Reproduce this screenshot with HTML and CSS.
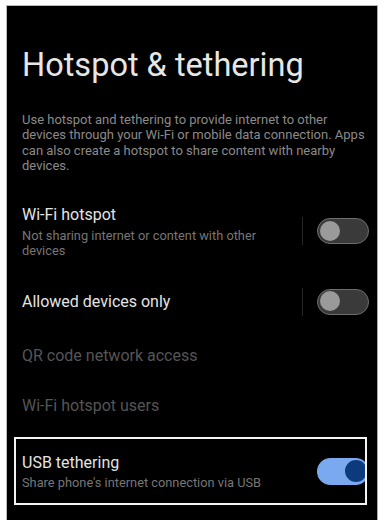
FILE: index.html
```html
<!DOCTYPE html>
<html lang="en">
<head>
    <meta charset="UTF-8">
    <meta name="viewport" content="width=device-width, initial-scale=1.0">
    <title>Hotspot &amp; tethering</title>
    <link rel="stylesheet" href="styles.css">
</head>
<body>
    <div class="screen">
        <h1>Hotspot &amp; tethering</h1>

        <p class="intro">Use hotspot and tethering to provide internet to other devices through your Wi-Fi or mobile data connection. Apps can also create a hotspot to share content with nearby devices.</p>

        <div class="row">
            <div class="row-text">
                <div class="row-title">Wi-Fi hotspot</div>
                <div class="row-sub">Not sharing internet or content with other devices</div>
            </div>
            <span class="divider"></span>
            <span class="toggle"><span class="knob"></span></span>
        </div>

        <div class="row">
            <div class="row-text">
                <div class="row-title">Allowed devices only</div>
            </div>
            <span class="divider"></span>
            <span class="toggle"><span class="knob"></span></span>
        </div>

        <div class="row">
            <div class="row-text">
                <div class="row-title disabled">QR code network access</div>
            </div>
        </div>

        <div class="row">
            <div class="row-text">
                <div class="row-title disabled">Wi-Fi hotspot users</div>
            </div>
        </div>

        <div class="row highlight">
            <div class="row-text">
                <div class="row-title">USB tethering</div>
                <div class="row-sub">Share phone's internet connection via USB</div>
            </div>
            <span class="toggle on"><span class="knob"></span></span>
        </div>
    </div>
</body>
</html>
```

FILE: styles.css
```css
* {
    margin: 0;
    padding: 0;
    box-sizing: border-box;
}

body {
    background: #fff;
    font-family: 'Roboto', 'Noto Sans', sans-serif;
    height: 520px;
    overflow: hidden;
}

.screen {
    margin: 5px 6px 0 6px;
    height: 515px;
    background: #000;
    border-top: 1px solid #bbb;
    border-left: 1px solid #bbb;
    border-right: 1px solid #aaa;
    padding: 40px 8px 0 15px;
}

h1 {
    font-size: 32.5px;
    line-height: 38px;
    font-weight: 400;
    color: #e6e6e6;
}

.intro {
    margin-top: 28px;
    max-width: 346px;
    font-size: 13px;
    line-height: 15.4px;
    color: #8a8a8a;
}

.row {
    display: flex;
    align-items: center;
    padding: 15px 0;
}

.intro + .row {
    margin-top: 16.5px;
}

.row-text {
    flex: 1;
    min-width: 0;
}

.row-title {
    font-size: 16px;
    line-height: 20px;
    color: #e4e4e4;
}

.row-title.disabled {
    color: #555;
}

.row-sub {
    margin-top: 2.5px;
    max-width: 250px;
    font-size: 12.8px;
    line-height: 15px;
    color: #767676;
}

.divider {
    width: 1px;
    height: 28px;
    background: #262626;
    margin-right: 14px;
}

.toggle {
    position: relative;
    width: 52px;
    height: 26px;
    border-radius: 13px;
    background: #3a3a3a;
    border: 1.5px solid #6e6e6e;
    flex-shrink: 0;
}

.toggle .knob {
    position: absolute;
    left: 2px;
    top: 1.5px;
    width: 20px;
    height: 20px;
    border-radius: 50%;
    background: #9a9a9a;
}

.toggle.on {
    background: #7ba9f0;
    border-color: #7ba9f0;
    height: 27px;
}

.toggle.on .knob {
    left: auto;
    right: 1px;
    top: 1px;
    width: 22px;
    height: 22px;
    background: #0c3a7c;
}

.row.highlight {
    margin: 6px 2px 0 -8px;
    padding: 14px 0 12.5px 6px;
    border: 2px solid #f4f4f4;
    overflow: hidden;
}

.row.highlight .toggle {
    margin-right: -4px;
}
```
